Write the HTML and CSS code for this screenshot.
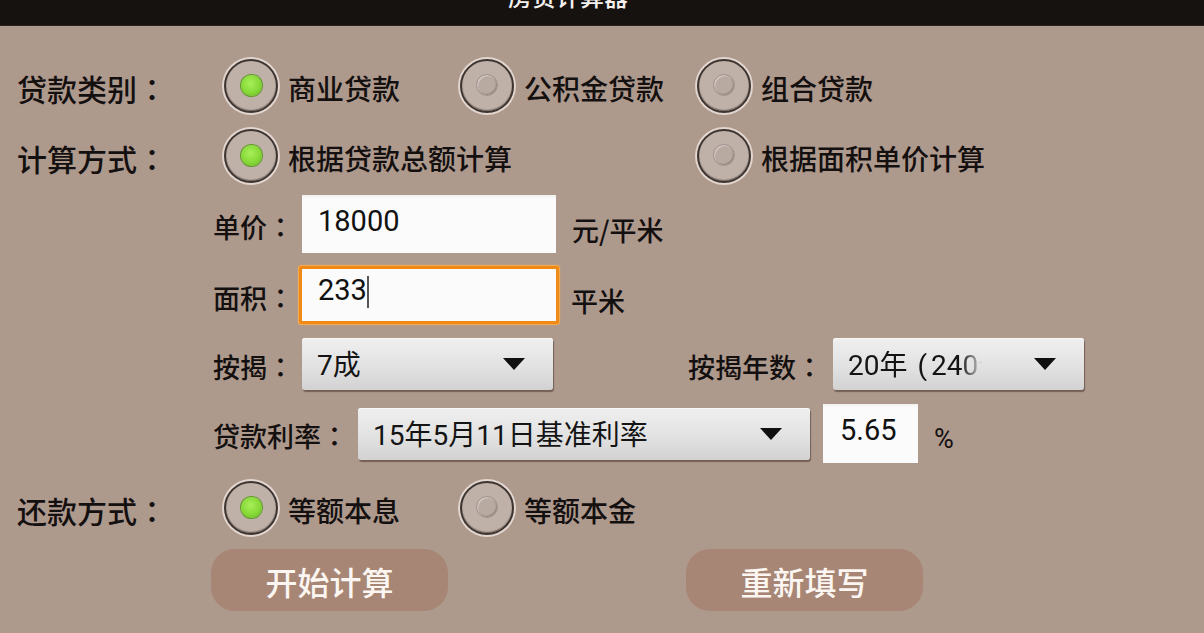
FILE: index.html
```html
<!DOCTYPE html>
<html lang="zh-CN">
<head>
<meta charset="utf-8">
<title>房贷计算器</title>
<link rel="stylesheet" href="styles.css">
</head>
<body>
<header class="titlebar"><div class="title">房贷计算器</div></header>
<main class="form">
  <div class="row r1 big">
    <div class="label lbl-big">贷款类别<span class="colon" lang="zh-TW">：</span></div>
    <div class="opt checked w1"><span class="ring"></span><span class="otext">商业贷款</span></div>
    <div class="opt w2"><span class="ring"></span><span class="otext">公积金贷款</span></div>
    <div class="opt"><span class="ring"></span><span class="otext">组合贷款</span></div>
  </div>
  <div class="row r2 big">
    <div class="label lbl-big">计算方式<span class="colon" lang="zh-TW">：</span></div>
    <div class="opt checked wide"><span class="ring"></span><span class="otext">根据贷款总额计算</span></div>
    <div class="opt"><span class="ring"></span><span class="otext">根据面积单价计算</span></div>
  </div>
  <div class="row r3 sub">
    <div class="label lbl-sm w89">单价<span class="colon" lang="zh-TW">：</span></div>
    <div class="field f-price"><span class="val">18000</span></div>
    <div class="unit u1">元/平米</div>
  </div>
  <div class="row r4 sub">
    <div class="label lbl-sm w89">面积<span class="colon" lang="zh-TW">：</span></div>
    <div class="field f-area focused"><span class="val">233</span><span class="caret"></span></div>
    <div class="unit u2">平米</div>
  </div>
  <div class="row r5 sub">
    <div class="label lbl-sm w89">按揭<span class="colon" lang="zh-TW">：</span></div>
    <div class="spinner sp1"><span class="stext">7成</span><span class="arrow"></span></div>
    <div class="label lbl-sm w145 gap135">按揭年数<span class="colon" lang="zh-TW">：</span></div>
    <div class="spinner sp2"><span class="stext clip">20年<span class="paren">(</span>240个月<span class="paren">)</span></span><span class="arrow"></span></div>
  </div>
  <div class="row r6 sub">
    <div class="label lbl-sm w145">贷款利率<span class="colon" lang="zh-TW">：</span></div>
    <div class="spinner sp3"><span class="stext">15年5月11日基准利率</span><span class="arrow"></span></div>
    <div class="field f-rate"><span class="val">5.65</span></div>
    <div class="pct">%</div>
  </div>
  <div class="row r7 big">
    <div class="label lbl-big">还款方式<span class="colon" lang="zh-TW">：</span></div>
    <div class="opt checked w1"><span class="ring"></span><span class="otext">等额本息</span></div>
    <div class="opt"><span class="ring"></span><span class="otext">等额本金</span></div>
  </div>
  <div class="row r8">
    <button class="btn">开始计算</button>
    <button class="btn btn2">重新填写</button>
  </div>
</main>
</body>
</html>
```
FILE: styles.css
```css
* { box-sizing: border-box; }
html, body { margin: 0; padding: 0; }
body {
  width: 1204px;
  height: 633px;
  overflow: hidden;
  background: #ae998d;
  font-family: Roboto, "Noto Sans CJK SC", sans-serif;
  color: #141010;
}
.titlebar {
  height: 26px;
  background: #161210;
  border-bottom: 1px solid #2b211d;
  overflow: hidden;
  padding-right: 68px;
  text-align: center;
}
.title {
  font-family: "Noto Sans CJK SC", sans-serif;
  font-size: 24px;
  line-height: 24px;
  margin-top: -16px;
  color: #f4f0ee;
  font-weight: 500;
}
.form { display: flex; flex-direction: column; }
.row { display: flex; align-items: center; }
.big { padding-left: 17px; }
.sub { padding-left: 213px; }
.r1 { margin-top: 30px; height: 60px; }
.r2 { margin-top: 10px; height: 60px; }
.r3 { margin-top: 9px; height: 58px; }
.r4 { margin-top: 12px; height: 60px; }
.r5 { margin-top: 13px; height: 52px; }
.r6 { margin-top: 14px; height: 59px; }
.r7 { margin-top: 15px; height: 60px; }
.r8 { margin-top: 11px; height: 62px; padding-left: 211px; }

.label { font-family: "Noto Sans CJK SC", sans-serif; font-weight: 500; flex: none; white-space: nowrap; }
.colon { font-family: "Noto Sans CJK TC", "Noto Sans CJK JP", sans-serif; }
.paren { font-family: Roboto, sans-serif; margin: 0 4px 0 10px; }
.lbl-big { width: 207px; font-size: 30px; line-height: 30px; padding-top: 4px; }
.lbl-sm { font-size: 27px; line-height: 27px; padding-top: 4px; }
.w89 { width: 89px; }
.w145 { width: 145px; }
.gap135 { margin-left: 135px; }

.opt { display: flex; align-items: center; flex: none; }
.w1 { width: 236px; }
.w2 { width: 237px; }
.wide { width: 473px; }
.ring {
  width: 54px;
  height: 54px;
  flex: none;
  border-radius: 50%;
  border: 2.5px solid #3e3531;
  box-shadow: 0 0 0 2px #e2d6cf, inset 0 -1px 1px rgba(40, 30, 25, 0.5);
  background: #bfb0a8;
  display: flex;
  align-items: center;
  justify-content: center;
}
.ring::after {
  content: "";
  width: 20px;
  height: 20px;
  border-radius: 50%;
  margin-top: -2px;
  background: #b8a9a1;
  border: 1px solid #a3958d;
  box-shadow: inset 1px 1px 1px rgba(255, 255, 255, 0.45), inset -1px -1px 1px rgba(90, 70, 60, 0.35);
}
.checked .ring::after {
  width: 21px;
  height: 21px;
  border: none;
  background: radial-gradient(circle at 45% 40%, #a8ef5a 0%, #86d936 55%, #62b022 100%);
  box-shadow: 0 0 0 1px #5f9a2a;
}
.otext {
  margin-left: 10px;
  font-family: "Noto Sans CJK SC", sans-serif;
  font-weight: 500;
  font-size: 28px;
  line-height: 28px;
  padding-top: 4px;
  white-space: nowrap;
}

.field {
  flex: none;
  display: flex;
  align-items: flex-start;
  background: linear-gradient(#f2f1f0 0, #fbfbfb 4px, #fbfbfb 100%);
  font-size: 29px;
  line-height: 36px;
  color: #111;
}
.f-price { width: 254px; height: 58px; padding: 8px 0 0 16px; }
.f-area {
  width: 260px;
  height: 58px;
  margin-left: -3px;
  padding: 3px 0 0 16px;
  border: 3px solid #f08a14;
  box-shadow: 0 0 1px 1px #f8ad52;
  border-radius: 2px;
  background: #fbfbfb;
}
.f-rate { width: 95px; height: 59px; margin-left: 13px; padding: 8px 0 0 17px; }
.caret { width: 2px; height: 32px; margin-top: 4px; background: #555; flex: none; }

.unit { font-family: "Noto Sans CJK SC", sans-serif; font-weight: 500; font-size: 27px; line-height: 27px; padding-top: 10px; white-space: nowrap; }
.u1 { margin-left: 16px; }
.u2 { margin-left: 12px; }
.pct { margin-left: 16px; font-size: 27px; line-height: 27px; padding-top: 12px; }

.spinner {
  flex: none;
  height: 52px;
  display: flex;
  align-items: center;
  justify-content: space-between;
  padding: 4px 28px 0 15px;
  border-radius: 3px;
  background: linear-gradient(#efefef, #e2e2e2 55%, #d2d2d2);
  box-shadow: 1px 2px 1px rgba(70, 50, 40, 0.55), inset 0 1px 0 #f8f8f8;
  font-size: 28px;
  line-height: 30px;
  color: #141414;
}
.sp1 { width: 251px; }
.sp2 { width: 251px; }
.sp3 { width: 452px; }
.stext { white-space: nowrap; }
.clip {
  width: 134px;
  overflow: hidden;
  -webkit-mask-image: linear-gradient(to right, #000 84%, rgba(0,0,0,0.3) 96%, transparent 100%);
  mask-image: linear-gradient(to right, #000 84%, rgba(0,0,0,0.3) 96%, transparent 100%);
}
.arrow {
  flex: none;
  width: 0;
  height: 0;
  margin-top: -4px;
  border-left: 11.5px solid transparent;
  border-right: 11.5px solid transparent;
  border-top: 12px solid #101010;
}

.btn {
  flex: none;
  width: 237px;
  height: 62px;
  border: none;
  border-radius: 24px;
  background: #a88675;
  color: #fbf6f2;
  font-family: "Noto Sans CJK SC", sans-serif;
  font-weight: 500;
  font-size: 32px;
  line-height: 32px;
  padding: 2px 0 0 0;
  margin: 0;
}
.btn2 { margin-left: 238px; }
```
